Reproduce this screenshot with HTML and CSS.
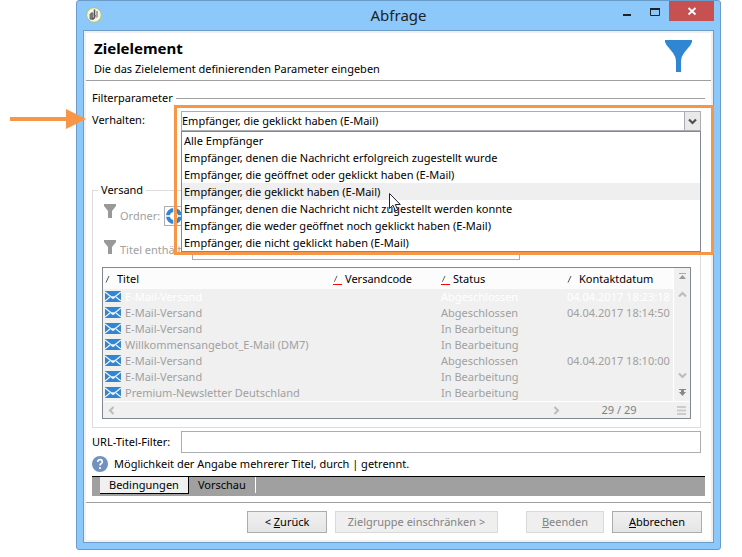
FILE: index.html
```html
<!DOCTYPE html>
<html lang="de">
<head>
<meta charset="utf-8">
<title>Abfrage</title>
<link rel="stylesheet" href="styles.css">
</head>
<body>
<svg width="0" height="0" class="defs" aria-hidden="true">
  <symbol id="funnel" viewBox="0 0 28 32"><path d="M0 0h27v2q-1 3-4 6l-4 5q-3 4-3 8v11h-5V21q0-4-3-8L4 8Q1 5 0 2z" fill="currentColor"/></symbol>
  <symbol id="funnel-small" viewBox="0 0 12 14"><path d="M0 0h12v2L8 7v7H4V7L0 2z" fill="currentColor"/></symbol>
  <symbol id="mail" viewBox="0 0 16 11"><path d="M0 0h16v11H0z" fill="#2f86d2"/><path d="M0 1l6.500 5h3l6.500-5M0 10l5-4M16 10l-5-4M6 6l2 1.500 2-1.500" fill="none" stroke="#efefef" stroke-width="1.300"/></symbol>
  <symbol id="sort" viewBox="0 0 9 10"><path d="M1 7.500L4 1" stroke="#555" fill="none"/></symbol>
</svg>
<main class="window">
  <header class="titlebar">
    <svg class="app-icon" viewBox="0 0 16 16"><circle cx="8" cy="8" r="7.300" fill="#f4f6ee" stroke="#a8c860" stroke-width="1"/><path d="M3.500 7L6 5l1.500 1v6L5 13l-1.500-1z" fill="#777"/><path d="M8.500 2.500v6M6 12q3 0 3-4" stroke="#555" stroke-width="1.500" fill="none"/><path d="M10 4h2v6l-2 1z" fill="#aaa"/></svg>
    <h1>Abfrage</h1>
    <div class="controls">
      <button class="ctl" aria-label="Minimieren"><svg viewBox="0 0 10 10"><path d="M1 9h8" stroke="#222" stroke-width="2"/></svg></button>
      <button class="ctl" aria-label="Maximieren"><svg viewBox="0 0 10 10"><path d="M.5 2v7.500h9V2" fill="none" stroke="#222"/><path d="M0 3h10" stroke="#222" stroke-width="2"/></svg></button>
      <button class="ctl close" aria-label="Schließen"><svg viewBox="0 0 10 10"><path d="M1.500 2l7 6.500M8.500 2l-7 6.500" stroke="#fff" stroke-width="1.800"/></svg></button>
    </div>
  </header>
  <div class="client">
    <section class="intro">
      <div>
        <h2>Zielelement</h2>
        <p>Die das Zielelement definierenden Parameter eingeben</p>
      </div>
      <svg class="big-funnel"><use href="#funnel"/></svg>
    </section>
    <form class="body">
      <div class="rule-title">Filterparameter</div>
      <div class="field behaviour">
        <label for="verhalten">Verhalten:</label>
        <div class="combo">
          <select id="verhalten"><option>Empfänger, die geklickt haben (E-Mail)</option></select>
          <span class="drop"><svg viewBox="0 0 9 7"><path d="M1 1.500l3.500 3.500L8 1.500" fill="none" stroke="#505050" stroke-width="2.200"/></svg></span>
          <ul class="menu">
            <li>Alle Empfänger</li>
            <li>Empfänger, denen die Nachricht erfolgreich zugestellt wurde</li>
            <li>Empfänger, die geöffnet oder geklickt haben (E-Mail)</li>
            <li class="current">Empfänger, die geklickt haben (E-Mail)</li>
            <li>Empfänger, denen die Nachricht nicht zugestellt werden konnte</li>
            <li>Empfänger, die weder geöffnet noch geklickt haben (E-Mail)</li>
            <li>Empfänger, die nicht geklickt haben (E-Mail)</li>
          </ul>
          <div class="frame"></div>
          <svg class="arrow" viewBox="0 0 76 20"><path d="M0 8h56V0l20 10-20 10v-8H0z" fill="#f79646"/></svg>
          <svg class="cursor" viewBox="0 0 12 19"><path d="M.5.500v15l3.500-3.300 2.500 5.800 2.300-1-2.500-5.500h5z" fill="#fff" stroke="#223"/></svg>
        </div>
      </div>
      <fieldset>
        <legend>Versand</legend>
        <div class="filter">
          <svg class="small-funnel"><use href="#funnel-small"/></svg>
          <label for="ordner">Ordner:</label>
          <button type="button" id="ordner" class="folder" aria-label="Ordner"><svg viewBox="0 0 18 18"><circle cx="9" cy="9" r="6" fill="none" stroke="#2f86d2" stroke-width="4"/><path d="M9 0v18M0 9h18" stroke="#fff" stroke-width="1.500"/><circle cx="9" cy="9" r="3.500" fill="#fff"/></svg></button>
        </div>
        <div class="filter second">
          <svg class="small-funnel"><use href="#funnel-small"/></svg>
          <label for="titel">Titel enthält:</label>
          <input id="titel" class="title-input" disabled>
        </div>
        <div class="list">
          <div class="grid">
            <table>
              <colgroup><col><col class="c-code"><col class="c-status"><col class="c-date"></colgroup>
              <thead><tr>
                <th><svg class="sort"><use href="#sort"/></svg>Titel</th>
                <th><svg class="sort red"><use href="#sort"/></svg>Versandcode</th>
                <th><svg class="sort red"><use href="#sort"/></svg>Status</th>
                <th><svg class="sort"><use href="#sort"/></svg>Kontaktdatum</th>
              </tr></thead>
              <tbody>
                <tr class="selected"><td><svg class="mail"><use href="#mail"/></svg>E-Mail-Versand</td><td></td><td>Abgeschlossen</td><td>04.04.2017 18:23:18</td></tr>
                <tr><td><svg class="mail"><use href="#mail"/></svg>E-Mail-Versand</td><td></td><td>Abgeschlossen</td><td>04.04.2017 18:14:50</td></tr>
                <tr><td><svg class="mail"><use href="#mail"/></svg>E-Mail-Versand</td><td></td><td>In Bearbeitung</td><td></td></tr>
                <tr><td><svg class="mail"><use href="#mail"/></svg>Willkommensangebot_E-Mail (DM7)</td><td></td><td>In Bearbeitung</td><td></td></tr>
                <tr><td><svg class="mail"><use href="#mail"/></svg>E-Mail-Versand</td><td></td><td>Abgeschlossen</td><td>04.04.2017 18:10:00</td></tr>
                <tr><td><svg class="mail"><use href="#mail"/></svg>E-Mail-Versand</td><td></td><td>In Bearbeitung</td><td></td></tr>
                <tr><td><svg class="mail"><use href="#mail"/></svg>Premium-Newsletter Deutschland</td><td></td><td>In Bearbeitung</td><td></td></tr>
              </tbody>
            </table>
            <div class="vscroll">
              <svg viewBox="0 0 9 7"><path d="M1 .5h7" stroke="#aaa" fill="none"/><path d="M4.500 2L8 6H1z" fill="#999"/></svg>
              <svg class="up" viewBox="0 0 9 7"><path d="M1 5.500L4.500 2 8 5.500" fill="none" stroke="#bbb" stroke-width="2"/></svg>
              <svg class="down" viewBox="0 0 9 7"><path d="M1 1.500L4.500 5 8 1.500" fill="none" stroke="#bbb" stroke-width="2"/></svg>
              <svg viewBox="0 0 9 7"><path d="M1 .5h7" stroke="#888" fill="none"/><path d="M3 1h3v2h2L4.500 7 1 3h2z" fill="#888"/></svg>
            </div>
          </div>
          <div class="hscroll">
            <div class="track">
              <svg viewBox="0 0 7 9"><path d="M5.500 1L2 4.500 5.500 8" fill="none" stroke="#bbb" stroke-width="2"/></svg>
              <svg viewBox="0 0 7 9"><path d="M1.500 1L5 4.500 1.500 8" fill="none" stroke="#bbb" stroke-width="2"/></svg>
            </div>
            <span class="count">29 / 29</span>
            <svg class="lines" viewBox="0 0 9 9"><path d="M0 1h9M0 4.500h9M0 8h9" stroke="#ccc" stroke-width="2"/></svg>
          </div>
        </div>
      </fieldset>
      <div class="field url">
        <label for="url">URL-Titel-Filter:</label>
        <input id="url">
      </div>
      <p class="hint"><svg viewBox="0 0 16 16"><circle cx="8" cy="8" r="8" fill="#7092be"/><path d="M5.700 6q0-2.300 2.300-2.300T10.300 5.800Q10.300 7 9 7.800 8 8.500 8 9.500M8 11v2" fill="none" stroke="#fff" stroke-width="1.700"/></svg>Möglichkeit der Angabe mehrerer Titel, durch | getrennt.</p>
      <nav class="tabs"><button type="button" class="active">Bedingungen</button><button type="button">Vorschau</button></nav>
    </form>
    <footer>
      <button class="back">&lt; <u>Z</u>urück</button>
      <button class="limit" disabled>Zielgruppe einschränken &gt;</button>
      <button class="finish" disabled><u>B</u>eenden</button>
      <button class="cancel"><u>A</u>bbrechen</button>
    </footer>
  </div>
</main>
</body>
</html>
```
FILE: styles.css
```css
* { box-sizing: border-box; }
body { margin: 0; background: #fff; color: #000; font: 11px/16px "Noto Sans", "Open Sans", sans-serif; }
h1, h2, p, ul { margin: 0; padding: 0; }
button, input, select { font: inherit; color: inherit; margin: 0; }
svg { display: block; flex: none; }
.defs { position: absolute; }
.window { margin: 0 21px 7px 76px; padding: 0 6px 6px; background: #8dc8fb; border: 1px solid #6a9bc9; border-radius: 3px; }
.titlebar { display: grid; grid-template-columns: 108px 1fr 108px; height: 29px; }
.app-icon { width: 16px; height: 16px; margin: 6px 0 0 3px; }
h1 { font-size: 15px; line-height: 20px; font-weight: 400; text-align: center; padding-top: 4px; color: #222; }
.controls { display: flex; align-items: start; justify-content: end; }
.ctl { width: 28px; height: 20px; border: 0; padding: 0; background: none; display: grid; place-items: center; }
.ctl svg { width: 10px; height: 10px; }
.close { width: 45px; background: #c75050; }
.client { background: #fff; border: 1px solid #6f9dc9; box-shadow: inset 0 0 0 2px #f0f0f0; padding: 2px; }
.intro { display: flex; justify-content: space-between; height: 48px; padding: 5px 18px 0 8px; border-bottom: 1px solid #a0a0a0; }
h2 { font-size: 15px; line-height: 20px; }
.intro p { margin-top: 3px; }
.big-funnel { width: 28px; height: 32px; margin-top: 2px; color: #2f86d2; }
.body { padding: 9px 6px 6px; }
.rule-title { display: flex; align-items: center; gap: 3px; }
.rule-title::after { content: ""; flex: 1; height: 1px; background: #a0a0a0; }
.field { display: grid; grid-template-columns: 89px 1fr; padding-right: 4px; }
.behaviour { margin-top: 5px; }
.behaviour label { padding-top: 1px; }
.combo { position: relative; }
select { appearance: none; display: block; width: 100%; height: 20px; padding: 0; border: 1px solid #abadb3; border-radius: 0; background: #fff; }
.drop { position: absolute; top: 1px; right: 1px; width: 16px; height: 18px; border-left: 1px solid #abadb3; background: #e9e9e9; display: grid; place-items: center; pointer-events: none; }
.drop svg { width: 9px; height: 7px; }
.menu { position: absolute; z-index: 2; top: 20px; left: 0; right: 0; list-style: none; border: 1px solid #828790; background: #fff; }
.menu li { height: 17px; line-height: 18px; padding-left: 2px; }
.menu .current { background: #efefef; }
.frame { position: absolute; z-index: 3; top: -6px; left: -7px; right: -13px; height: 150px; border: 3px solid #f79646; }
.arrow { position: absolute; z-index: 3; top: -2px; left: -171px; width: 76px; height: 20px; }
.cursor { position: absolute; z-index: 4; top: 82px; left: 208px; width: 12px; height: 19px; }
fieldset { min-width: 0; margin: 51px 4px 0 0; padding: 6px 9px 8px; border: 1px solid #dcdcdc; }
legend { padding: 0 3px; margin-left: -4px; }
.filter { display: flex; height: 20px; gap: 4px; color: #a0a0a0; }
.filter label { padding-top: 4px; }
.filter .folder { margin-top: 2px; }
.second { margin-top: 16px; }
.second label { width: 68px; padding-top: 2px; }
.small-funnel { width: 12px; height: 14px; color: #999; margin: 0 0 0 2px; }
.folder { width: 24px; height: 20px; padding: 0; border: 1px solid #abadb3; background: #fff; }
.folder svg { width: 18px; height: 18px; }
.title-input { width: 328px; height: 20px; border: 1px solid #abadb3; background: #fff; }
.list { margin-top: 7px; border: 1px solid #828790; background: #f0f0f0; color: #a0a0a0; }
.grid { display: flex; border-bottom: 1px solid #fff; }
table { flex: 1; width: 100%; min-width: 0; border-spacing: 0; table-layout: fixed; }
.c-code { width: 108px; }
.c-status { width: 126px; }
.c-date { width: 106px; }
th, td { padding: 0; height: 16px; text-align: left; font-weight: 400; white-space: nowrap; }
th { height: 21px; background: #fcfcfc; color: #000; }
th:first-child, td:first-child { padding-left: 2px; }
.sort { float: left; width: 9px; height: 10px; margin: 4px 3px 0 0; }
.red { border-bottom: 1px solid #f00; }
.mail { float: left; width: 16px; height: 11px; margin: 2px 4px 0 0; }
.selected td { color: #fff; }
.vscroll { flex: none; width: 17px; border-left: 1px solid #fff; display: flex; flex-direction: column; align-items: center; padding: 5px 0; }
.vscroll svg { width: 9px; height: 7px; }
.vscroll .up { margin-top: 11px; }
.vscroll .down { margin-top: auto; margin-bottom: 10px; }
.hscroll { display: flex; align-items: center; height: 16px; }
.track { flex: 1; display: flex; justify-content: space-between; padding: 0 5px; }
.track svg { width: 7px; height: 9px; }
.count { width: 108px; text-align: center; color: #808080; }
.lines { width: 9px; height: 9px; margin: 0 4px; }
.url { margin-top: 3px; align-items: center; }
.url input { width: 100%; height: 22px; border: 1px solid #abadb3; }
.hint { display: flex; gap: 6px; margin-top: 3px; }
.hint svg { width: 16px; height: 16px; }
.tabs { display: flex; align-items: start; height: 20px; margin-top: 4px; padding-left: 8px; background: #a0a0a0; border-top: 1px solid #000; }
.tabs button { height: 16px; padding: 0 9px; border: 0; border-right: 1px solid #fff; background: none; }
.tabs .active { height: 17px; background: #f0f0f0; border-right: 1px solid #000; border-bottom: 1px solid #000; }
footer { display: flex; justify-content: end; padding: 8px 9px 7px; border-top: 1px solid #a0a0a0; }
footer button { height: 22px; padding: 0; border: 1px solid #acacac; background: linear-gradient(#f0f0f0, #e5e5e5); white-space: nowrap; }
footer button:disabled { border-color: #d9d9d9; background: #efefef; color: #838383; }
.back { width: 80px; }
.limit { width: 163px; margin: 0 28px 0 8px; }
.finish { width: 78px; margin-right: 8px; }
.cancel { width: 90px; }
```
